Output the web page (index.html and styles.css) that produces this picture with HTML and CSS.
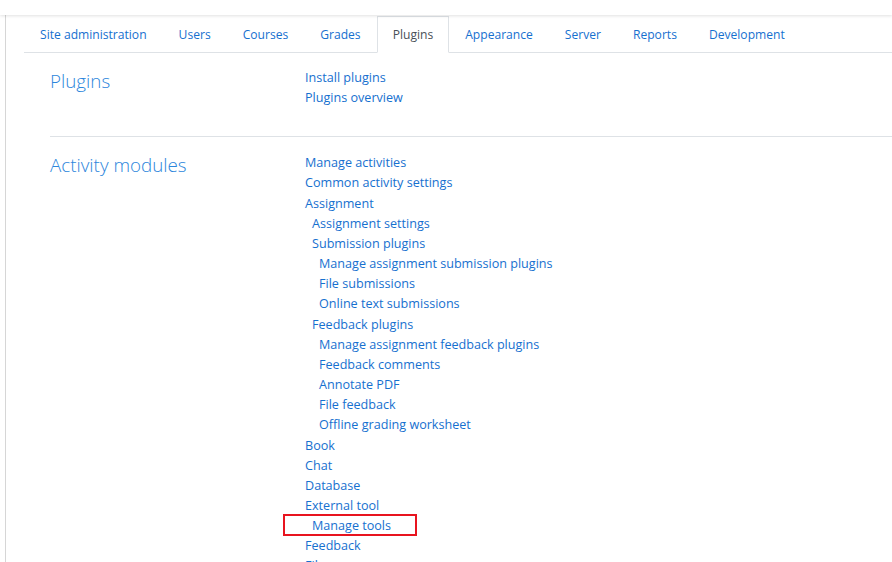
FILE: index.html
```html
<!DOCTYPE html>
<html lang="en">
<head>
    <meta charset="UTF-8">
    <title>Site administration - Plugins</title>
    <link rel="stylesheet" href="styles.css">
</head>
<body>
    <div class="topbar"></div>

    <div class="page">
        <ul class="tabs">
            <li><a href="#">Site administration</a></li>
            <li><a href="#">Users</a></li>
            <li><a href="#">Courses</a></li>
            <li><a href="#">Grades</a></li>
            <li class="active"><a href="#">Plugins</a></li>
            <li><a href="#">Appearance</a></li>
            <li><a href="#">Server</a></li>
            <li><a href="#">Reports</a></li>
            <li><a href="#">Development</a></li>
        </ul>

        <div class="section">
            <h2>Plugins</h2>
            <ul class="links">
                <li><a href="#">Install plugins</a></li>
                <li><a href="#">Plugins overview</a></li>
            </ul>
        </div>

        <div class="section">
            <h2>Activity modules</h2>
            <ul class="links">
                <li><a href="#">Manage activities</a></li>
                <li><a href="#">Common activity settings</a></li>
                <li><a href="#">Assignment</a></li>
                <li class="lvl2"><a href="#">Assignment settings</a></li>
                <li class="lvl2"><a href="#">Submission plugins</a></li>
                <li class="lvl3"><a href="#">Manage assignment submission plugins</a></li>
                <li class="lvl3"><a href="#">File submissions</a></li>
                <li class="lvl3"><a href="#">Online text submissions</a></li>
                <li class="lvl2"><a href="#">Feedback plugins</a></li>
                <li class="lvl3"><a href="#">Manage assignment feedback plugins</a></li>
                <li class="lvl3"><a href="#">Feedback comments</a></li>
                <li class="lvl3"><a href="#">Annotate PDF</a></li>
                <li class="lvl3"><a href="#">File feedback</a></li>
                <li class="lvl3"><a href="#">Offline grading worksheet</a></li>
                <li><a href="#">Book</a></li>
                <li><a href="#">Chat</a></li>
                <li><a href="#">Database</a></li>
                <li><a href="#">External tool</a></li>
                <li class="lvl2 marked"><a href="#">Manage tools</a></li>
                <li><a href="#">Feedback</a></li>
                <li><a href="#">File</a></li>
            </ul>
        </div>
    </div>
</body>
</html>
```

FILE: styles.css
```css
html, body {
    height: 100%;
    overflow: hidden;
}

body {
    margin: 0;
    background-color: #fff;
    font-family: "Open Sans", "Noto Sans", sans-serif;
    font-size: 12px;
    color: #333;
}

a {
    color: #1670cf;
    text-decoration: none;
}

ul {
    list-style: none;
    margin: 0;
    padding: 0;
}

.topbar {
    height: 15px;
    background-color: #fff;
    box-shadow: 0 1px 3px rgba(0, 0, 0, 0.12);
    position: relative;
    z-index: 1;
}

.page {
    margin-left: 5px;
    padding-left: 18px;
    border-left: 1px solid #d6d6d6;
    min-height: 100%;
}

/* tab bar */
.tabs {
    display: flex;
    padding-top: 1px;
    border-bottom: 1px solid #dee2e6;
}

.tabs li {
    border: 1px solid transparent;
    border-bottom: none;
    margin-bottom: -1px;
}

.tabs a {
    display: block;
    padding: 1px 15px 0;
    line-height: 34px;
    height: 34px;
    font-size: 12.1px;
}

.tabs li.active {
    border-color: #dee2e6;
    background-color: #fff;
    border-bottom: 1px solid #fff;
}

.tabs li.active a {
    color: #495057;
}

/* category sections */
.section {
    display: flex;
    margin-left: 26px;
    padding: 15px 0 28px;
    border-bottom: 1px solid #dee2e6;
}

.section + .section {
    padding-top: 16px;
}

.section h2 {
    width: 255px;
    flex-shrink: 0;
    margin: 0;
    font-size: 18.8px;
    font-weight: 300;
    color: #2c86dc;
    line-height: 26px;
}

.section + .section h2 {
    margin-top: -1px;
}

.links li {
    font-size: 12.6px;
    line-height: 20.15px;
}

.links .lvl2 {
    padding-left: 7px;
}

.links .lvl3 {
    padding-left: 14px;
}

.marked {
    position: relative;
}

.marked::before {
    content: "";
    position: absolute;
    left: -22px;
    top: -2px;
    width: 130px;
    height: 18px;
    border: 2px solid #e8141f;
}
```
